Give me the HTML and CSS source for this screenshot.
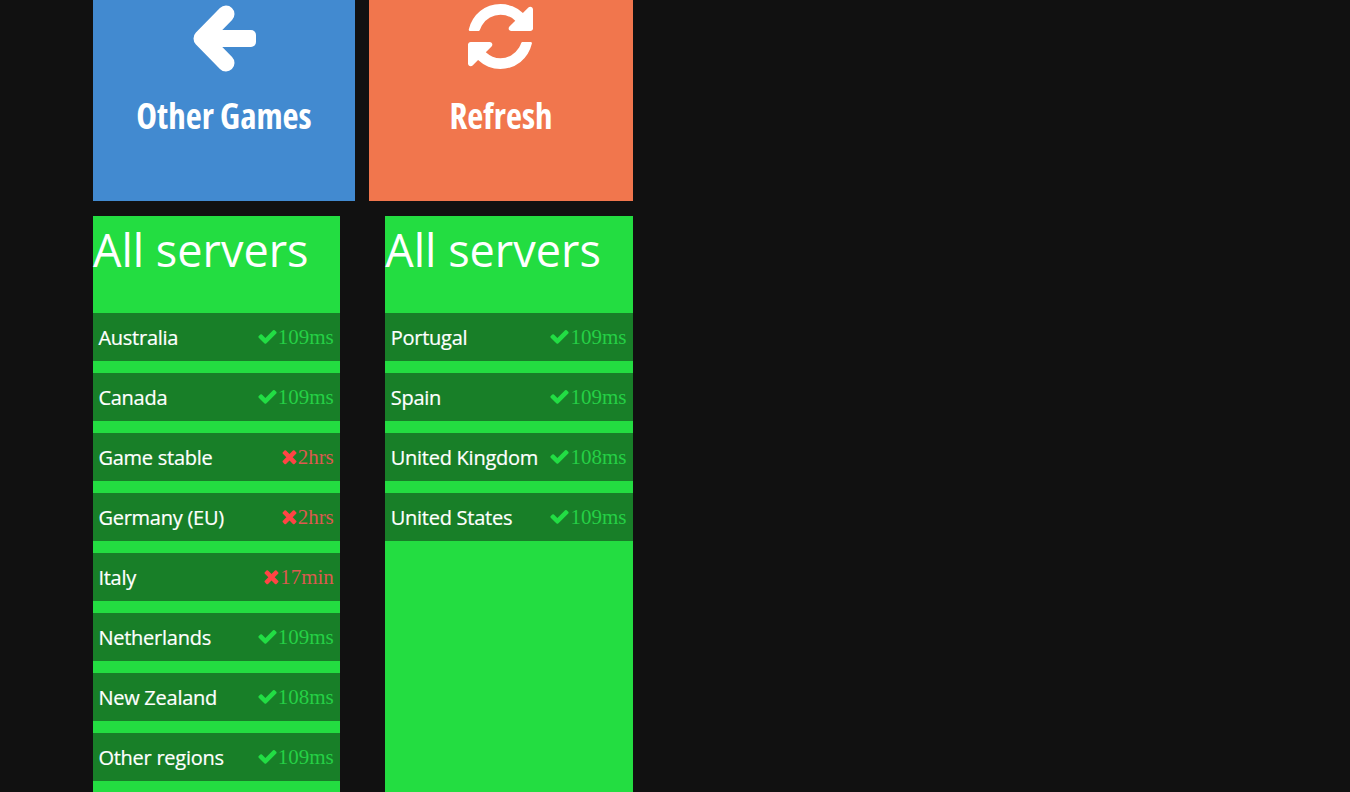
FILE: index.html
```html
<!DOCTYPE html>
<html lang="en">
<head>
<meta charset="utf-8">
<title>Servers</title>
<link rel="stylesheet" href="styles.css">
</head>
<body>
<main class="page">
  <div class="tiles">
    <a class="tile tile-blue">
      <svg class="icon-arrow" viewBox="0 0 66 68" aria-hidden="true"><path class="arrow-head" d="M36 9L12 33.5L36 58"/><rect class="arrow-shaft" x="12" y="25" width="54" height="17" rx="5"/></svg>
      <span class="tile-label">Other Games</span>
    </a>
    <a class="tile tile-orange">
      <svg class="icon-refresh" viewBox="128 128 1536 1536" aria-hidden="true"><path d="M1639 1056q0 5-1 7-64 268-268 434.5t-478 166.5q-146 0-282.5-55t-243.5-157l-129 129q-19 19-45 19t-45-19-19-45v-448q0-26 19-45t45-19h448q26 0 45 19t19 45-19 45l-137 137q71 66 161 102t187 36q134 0 250-65t186-179q11-17 53-117 8-23 30-23h192q13 0 22.5 9.5t9.5 22.5zm25-800v448q0 26-19 45t-45 19h-448q-26 0-45-19t-19-45 19-45l138-138q-148-137-349-137-134 0-250 65t-186 179q-11 17-53 117-8 23-30 23h-199q-13 0-22.5-9.5t-9.5-22.5v-7q65-268 270-434.5t480-166.5q146 0 284 55.5t245 156.5l130-129q19-19 45-19t45 19 19 45z"/></svg>
      <span class="tile-label">Refresh</span>
    </a>
  </div>
  <div class="panels">
    <section class="panel">
      <h2 class="panel-title">All servers</h2>
      <div class="row"><span class="name">Australia</span><span class="status ok"><svg viewBox="0 0 1792 1792"><path d="M1671 566q0 40-28 68l-724 724-136 136q-28 28-68 28t-68-28l-136-136-362-362q-28-28-28-68t28-68l136-136q28-28 68-28t68 28l294 295 656-657q28-28 68-28t68 28l136 136q28 28 28 68z"/></svg>109ms</span></div>
      <div class="row"><span class="name">Canada</span><span class="status ok"><svg viewBox="0 0 1792 1792"><path d="M1671 566q0 40-28 68l-724 724-136 136q-28 28-68 28t-68-28l-136-136-362-362q-28-28-28-68t28-68l136-136q28-28 68-28t68 28l294 295 656-657q28-28 68-28t68 28l136 136q28 28 28 68z"/></svg>109ms</span></div>
      <div class="row"><span class="name">Game stable</span><span class="status bad"><svg viewBox="0 0 1792 1792"><path d="M1490 1322q0 40-28 68l-136 136q-28 28-68 28t-68-28l-294-294-294 294q-28 28-68 28t-68-28l-136-136q-28-28-28-68t28-68l294-294-294-294q-28-28-28-68t28-68l136-136q28-28 68-28t68 28l294 294 294-294q28-28 68-28t68 28l136 136q28 28 28 68t-28 68l-294 294 294 294q28 28 28 68z"/></svg>2hrs</span></div>
      <div class="row"><span class="name">Germany (EU)</span><span class="status bad"><svg viewBox="0 0 1792 1792"><path d="M1490 1322q0 40-28 68l-136 136q-28 28-68 28t-68-28l-294-294-294 294q-28 28-68 28t-68-28l-136-136q-28-28-28-68t28-68l294-294-294-294q-28-28-28-68t28-68l136-136q28-28 68-28t68 28l294 294 294-294q28-28 68-28t68 28l136 136q28 28 28 68t-28 68l-294 294 294 294q28 28 28 68z"/></svg>2hrs</span></div>
      <div class="row"><span class="name">Italy</span><span class="status bad"><svg viewBox="0 0 1792 1792"><path d="M1490 1322q0 40-28 68l-136 136q-28 28-68 28t-68-28l-294-294-294 294q-28 28-68 28t-68-28l-136-136q-28-28-28-68t28-68l294-294-294-294q-28-28-28-68t28-68l136-136q28-28 68-28t68 28l294 294 294-294q28-28 68-28t68 28l136 136q28 28 28 68t-28 68l-294 294 294 294q28 28 28 68z"/></svg>17min</span></div>
      <div class="row"><span class="name">Netherlands</span><span class="status ok"><svg viewBox="0 0 1792 1792"><path d="M1671 566q0 40-28 68l-724 724-136 136q-28 28-68 28t-68-28l-136-136-362-362q-28-28-28-68t28-68l136-136q28-28 68-28t68 28l294 295 656-657q28-28 68-28t68 28l136 136q28 28 28 68z"/></svg>109ms</span></div>
      <div class="row"><span class="name">New Zealand</span><span class="status ok"><svg viewBox="0 0 1792 1792"><path d="M1671 566q0 40-28 68l-724 724-136 136q-28 28-68 28t-68-28l-136-136-362-362q-28-28-28-68t28-68l136-136q28-28 68-28t68 28l294 295 656-657q28-28 68-28t68 28l136 136q28 28 28 68z"/></svg>108ms</span></div>
      <div class="row"><span class="name">Other regions</span><span class="status ok"><svg viewBox="0 0 1792 1792"><path d="M1671 566q0 40-28 68l-724 724-136 136q-28 28-68 28t-68-28l-136-136-362-362q-28-28-28-68t28-68l136-136q28-28 68-28t68 28l294 295 656-657q28-28 68-28t68 28l136 136q28 28 28 68z"/></svg>109ms</span></div>
    </section>
    <section class="panel">
      <h2 class="panel-title">All servers</h2>
      <div class="row"><span class="name">Portugal</span><span class="status ok"><svg viewBox="0 0 1792 1792"><path d="M1671 566q0 40-28 68l-724 724-136 136q-28 28-68 28t-68-28l-136-136-362-362q-28-28-28-68t28-68l136-136q28-28 68-28t68 28l294 295 656-657q28-28 68-28t68 28l136 136q28 28 28 68z"/></svg>109ms</span></div>
      <div class="row"><span class="name">Spain</span><span class="status ok"><svg viewBox="0 0 1792 1792"><path d="M1671 566q0 40-28 68l-724 724-136 136q-28 28-68 28t-68-28l-136-136-362-362q-28-28-28-68t28-68l136-136q28-28 68-28t68 28l294 295 656-657q28-28 68-28t68 28l136 136q28 28 28 68z"/></svg>109ms</span></div>
      <div class="row"><span class="name">United Kingdom</span><span class="status ok"><svg viewBox="0 0 1792 1792"><path d="M1671 566q0 40-28 68l-724 724-136 136q-28 28-68 28t-68-28l-136-136-362-362q-28-28-28-68t28-68l136-136q28-28 68-28t68 28l294 295 656-657q28-28 68-28t68 28l136 136q28 28 28 68z"/></svg>108ms</span></div>
      <div class="row"><span class="name">United States</span><span class="status ok"><svg viewBox="0 0 1792 1792"><path d="M1671 566q0 40-28 68l-724 724-136 136q-28 28-68 28t-68-28l-136-136-362-362q-28-28-28-68t28-68l136-136q28-28 68-28t68 28l294 295 656-657q28-28 68-28t68 28l136 136q28 28 28 68z"/></svg>109ms</span></div>
    </section>
  </div>
</main>
</body>
</html>
```
FILE: styles.css
```css
html, body {
  margin: 0;
  height: 792px;
  overflow: hidden;
  background: #111111;
}
.page {
  width: 540px;
  margin-left: 93px;
  font-family: "Open Sans", "Liberation Sans", sans-serif;
  color: #ffffff;
}
.tiles {
  display: grid;
  grid-template-columns: 262px 264px;
  column-gap: 14px;
  margin-bottom: 15px;
}
.tile {
  height: 201px;
  box-sizing: border-box;
  padding-top: 5px;
  display: flex;
  flex-direction: column;
  align-items: center;
}
.tile-blue { background: #428ad0; }
.tile-orange { background: #f1764d; }
.icon-arrow {
  width: 66px;
  height: 68px;
  display: block;
  margin-right: 2px;
}
.arrow-head {
  fill: none;
  stroke: #ffffff;
  stroke-width: 17;
  stroke-linecap: round;
  stroke-linejoin: round;
}
.arrow-shaft { fill: #ffffff; }
.icon-refresh {
  width: 65px;
  height: 65px;
  margin-top: -1px;
  margin-right: 1px;
  margin-bottom: 4px;
  display: block;
  fill: #ffffff;
}
.tile-label {
  margin-top: 17px;
  font-size: 35px;
  line-height: 52px;
  font-weight: 700;
  font-stretch: 75%;
  white-space: nowrap;
}
.panels {
  display: grid;
  grid-template-columns: 247.3px 247.7px;
  column-gap: 45px;
}
.panel {
  background: #23dd41;
  padding-bottom: 12px;
}
.panel-title {
  margin: 0;
  height: 97px;
  font-size: 45px;
  line-height: 68px;
  font-weight: 400;
}
.row {
  height: 48px;
  margin-bottom: 12px;
  padding: 0 6.5px 0 5.4px;
  background: #187f28;
  display: flex;
  justify-content: space-between;
  align-items: center;
}
.name {
  font-size: 20px;
  letter-spacing: -0.25px;
  white-space: nowrap;
  -webkit-text-stroke: 0.2px #ffffff;
}
.status {
  display: flex;
  align-items: center;
  font-family: "Liberation Serif", serif;
  font-size: 21px;
  white-space: nowrap;
}
.status svg {
  width: 21px;
  height: 21px;
  margin-top: -1px;
}
.ok { color: #25d045; }
.ok svg { fill: #22dd44; }
.bad { color: #dc5a50; }
.bad svg { fill: #ff4444; margin-right: -2px; }
```
